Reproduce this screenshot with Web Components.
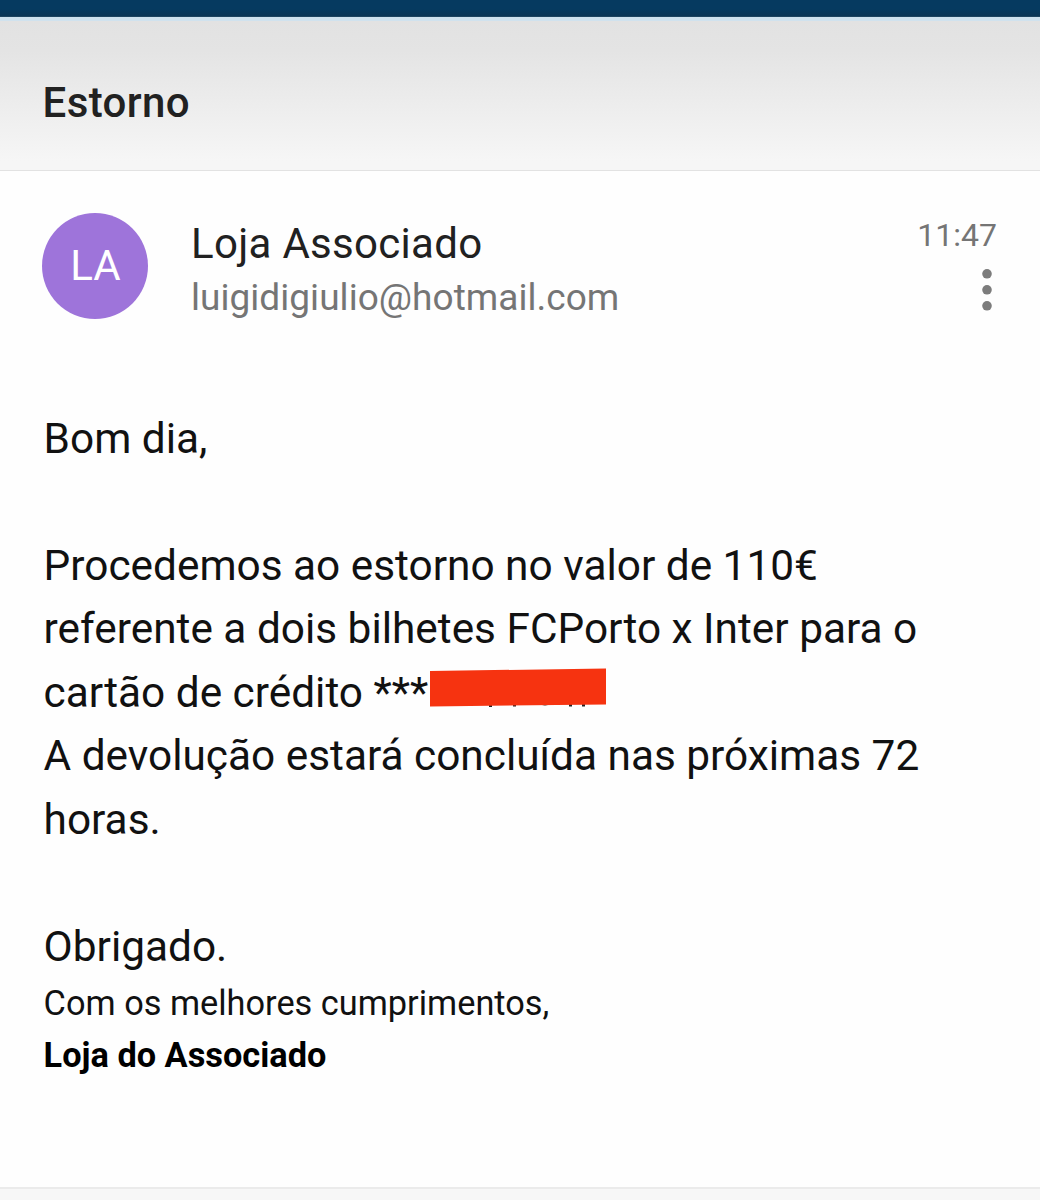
<!DOCTYPE html>
<html lang="pt">
<head>
<meta charset="utf-8">
<title>Estorno</title>
<style>
html,body{margin:0;height:1200px;overflow:hidden;background:#fff}
body{font-family:Roboto,"Liberation Sans",sans-serif}
</style>
</head>
<body>
<mail-screen>
  <subject-bar slot="subject">Estorno</subject-bar>
  <sender-row slot="sender" time="11:47">
    <sender-avatar slot="avatar">LA</sender-avatar>
    <span slot="name">Loja Associado</span>
    <span slot="address">luigidigiulio@hotmail.com</span>
  </sender-row>
  <mail-body>
    <text-line>Bom dia,</text-line>
    <text-line></text-line>
    <text-line>Procedemos ao estorno no valor de 110€</text-line>
    <text-line>referente a dois bilhetes FCPorto x Inter para o</text-line>
    <text-line>cartão de crédito ***<redaction-box></redaction-box></text-line>
    <text-line>A devolução estará concluída nas próximas 72</text-line>
    <text-line>horas.</text-line>
    <text-line></text-line>
    <text-line>Obrigado.</text-line>
    <mail-signature slot="signature">
      <span>Com os melhores cumprimentos,</span>
      <b slot="from">Loja do Associado</b>
    </mail-signature>
  </mail-body>
</mail-screen>
<script>
const define = (name, css, html, setup) => {
  const template = document.createElement('template');
  template.innerHTML = `<style>${css}</style>${html}`;
  customElements.define(name, class extends HTMLElement {
    constructor() {
      super();
      this.attachShadow({ mode: 'open' }).append(template.content.cloneNode(true));
    }
    connectedCallback() { if (setup) setup(this, this.shadowRoot); }
  });
};

define('mail-screen', `
  :host{display:flex;flex-direction:column;height:1200px;background:#fefefe}
  .status{height:17px;flex:none;background:linear-gradient(#063a60 0 9px,#0c3655 16px,#31536b)}
  .content{flex:1;min-height:0}
  footer{height:11px;flex:none;border-top:2px solid #ebebeb;background:#f7f7f7}
`, `<div class="status"></div><slot name="subject"></slot>
  <slot name="sender"></slot><div class="content"><slot></slot></div><footer></footer>`);

define('subject-bar', `
  :host{display:flex;align-items:center;box-sizing:border-box;height:154px;flex:none;
    padding:14px 42.5px 0;border-top:4px solid #d0e2ee;border-bottom:1px solid #e2e2e2;
    background:linear-gradient(#e2e2e2,#e4e4e4 20%,#f6f6f6 94%);color:#212121}
  h1{margin:0;font-size:42px;line-height:50px;font-weight:500;letter-spacing:.4px}
`, `<h1><slot></slot></h1>`);

define('sender-avatar', `
  :host{display:flex;align-items:center;justify-content:center;box-sizing:border-box;width:106px;height:106px;flex:none;
    padding-left:1px;border-radius:50%;background:#9e74da;color:#fff;font-size:42px;line-height:50px}
`, `<slot></slot>`);

define('sender-row', `
  :host{display:flex;box-sizing:border-box;height:235px;flex:none;padding:42px 43px 0 42px;align-items:flex-start}
  .who{display:flex;flex-direction:column;flex:1;margin-left:43px;padding-top:6px}
  .name{font-size:42px;line-height:50px;color:#212121;letter-spacing:.3px}
  .address{font-size:37px;line-height:44px;color:#757575;margin-top:7px;letter-spacing:.04px}
  .meta{display:flex;flex-direction:column;align-items:flex-end;color:#757575}
  time{font-size:32px;line-height:38px;margin-top:3px}
  svg{display:block;width:20px;height:50px;margin-top:12px}
`, `<slot name="avatar"></slot>
  <div class="who"><div class="name"><slot name="name"></slot></div><div class="address"><slot name="address"></slot></div></div>
  <div class="meta"><time></time><svg viewBox="0 0 20 50" fill="#7c7c7c"><circle cx="10" cy="7.8" r="4.8"/><circle cx="10" cy="23.8" r="4.8"/><circle cx="10" cy="39.8" r="4.8"/></svg></div>`,
  (host, root) => { root.querySelector('time').textContent = host.getAttribute('time'); });

define('mail-body', `
  :host{display:block;padding:.5px 43.6px 0;color:#111;font-size:42.36px;line-height:63.6px}
`, `<slot></slot><slot name="signature"></slot>`);

define('text-line', `
  :host{display:flex;align-items:center;height:63.6px;white-space:pre}
`, `<slot></slot>`);

define('redaction-box', `
  :host{display:block;margin:-10px 0 0 1.5px;width:177px;height:40px}
  svg{display:block}
`, `<svg width="177" height="40" viewBox="0 0 177 40">
  <path d="M59 36h3v3h-3zM83 36h3v2.500h-3zM109 35q6 5 12 0zM139 35h3v3.500h-3zM152 35h3v3.500h-3z" fill="#222"/>
  <path d="M0 3 176 .5V36.500L0 38.500z" fill="#f63310"/></svg>`);

define('mail-signature', `
  :host{display:flex;flex-direction:column;font-size:34.35px;line-height:52px;margin-top:-2px}
  ::slotted(b){font-weight:700;color:#000}
`, `<slot></slot><slot name="from"></slot>`);
</script>
</body>
</html>
